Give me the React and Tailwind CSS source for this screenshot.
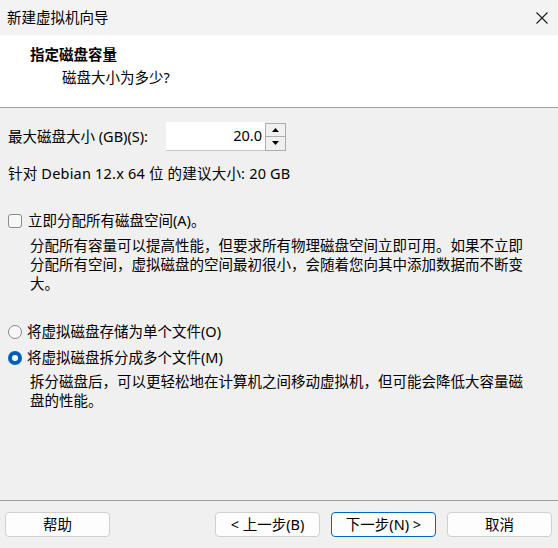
import React, { useState } from 'react';

const font = { fontFamily: '"Noto Sans", "Noto Sans CJK SC", sans-serif' };

const Button = ({ children, primary, className = '' }) => (
  <button
    className={`h-[25px] w-[105px] rounded-[4px] bg-[#fdfdfd] text-[14.5px] text-black leading-none ${
      primary ? 'border border-[#0067c0]' : 'border border-[#d0d0d0]'
    } ${className}`}
  >
    {children}
  </button>
);

const Radio = ({ checked, onClick, children }) => (
  <label className="flex h-[20px] cursor-default items-center" onClick={onClick}>
    {checked ? (
      <span className="mr-[5px] flex h-[14px] w-[14px] items-center justify-center rounded-full bg-[#005fb8]">
        <span className="h-[6px] w-[6px] rounded-full bg-white" />
      </span>
    ) : (
      <span className="mr-[5px] h-[14px] w-[14px] rounded-full border border-[#8a8a8a] bg-[#f7f7f7]" />
    )}
    <span>{children}</span>
  </label>
);

export default function App() {
  const [split, setSplit] = useState(true);
  const [alloc, setAlloc] = useState(false);

  return (
    <div className="flex h-[548px] w-[558px] flex-col bg-[#f0f0f0] text-[14.5px] text-black" style={font}>
      {/* Title bar */}
      <div className="flex h-[35px] shrink-0 items-center justify-between bg-[#f3f3f3] pl-[7px] pr-[8px]">
        <span className="text-[14.5px]">新建虚拟机向导</span>
        <svg width="14" height="14" viewBox="0 0 14 14" className="mr-[1px]">
          <path d="M1.5 1.5 L12.5 12.5 M12.5 1.5 L1.5 12.5" stroke="#1a1a1a" strokeWidth="1.1" fill="none" />
        </svg>
      </div>

      {/* Header */}
      <div className="h-[73px] shrink-0 border-b border-[#a0a0a0] bg-white pt-[8px]">
        <div className="h-[22px] pl-[30px] font-bold leading-[22px]">指定磁盘容量</div>
        <div className="mt-[1px] pl-[62px] leading-[22px]">磁盘大小为多少?</div>
      </div>

      {/* Body */}
      <div className="flex-1 px-[8px] pt-[14px]">
        <div className="flex h-[29px] items-center">
          <span className="w-[158px]">最大磁盘大小 (GB)(S):</span>
          <div className="flex h-[29px] items-center">
            <div className="flex h-[29px] w-[99px] items-center justify-end border-b border-[#c8c8c8] bg-white pr-[3px]">
              20.0
            </div>
            <div className="flex h-[28px] w-[21px] flex-col border border-[#adadad] bg-[#f0f0f0]">
              <div className="flex flex-1 items-center justify-center border-b border-[#adadad]">
                <svg width="7" height="4" viewBox="0 0 7 4"><path d="M0 4 L3.5 0 L7 4 Z" fill="#000" /></svg>
              </div>
              <div className="flex flex-1 items-center justify-center">
                <svg width="7" height="4" viewBox="0 0 7 4"><path d="M0 0 L3.5 4 L7 0 Z" fill="#000" /></svg>
              </div>
            </div>
          </div>
        </div>
        <div className="mt-[11px] leading-[22px] tracking-[0.2px]">针对 Debian 12.x 64 位 的建议大小: 20 GB</div>

        <label className="mt-[27px] flex h-[20px] items-center" onClick={() => setAlloc(!alloc)}>
          <span
            className={`mr-[6px] h-[14px] w-[14px] rounded-[3px] border ${
              alloc ? 'border-[#005fb8] bg-[#005fb8]' : 'border-[#8a8a8a] bg-[#f7f7f7]'
            }`}
          />
          <span>立即分配所有磁盘空间(A)。</span>
        </label>
        <div className="mt-[5px] whitespace-nowrap pl-[22px] leading-[19px]">
          分配所有容量可以提高性能，但要求所有物理磁盘空间立即可用。如果不立即
          <br />
          分配所有空间，虚拟磁盘的空间最初很小，会随着您向其中添加数据而不断变
          <br />
          大。
        </div>

        <div className="mt-[29px] flex flex-col gap-[6px]">
          <Radio checked={!split} onClick={() => setSplit(false)}>将虚拟磁盘存储为单个文件(O)</Radio>
          <Radio checked={split} onClick={() => setSplit(true)}>将虚拟磁盘拆分成多个文件(M)</Radio>
        </div>
        <div className="mt-[4px] whitespace-nowrap pl-[22px] leading-[18.5px]">
          拆分磁盘后，可以更轻松地在计算机之间移动虚拟机，但可能会降低大容量磁
          <br />
          盘的性能。
        </div>
      </div>

      {/* Footer */}
      <div className="flex h-[48px] shrink-0 items-start border-t border-[#a0a0a0] pt-[11px]">
        <Button className="ml-[5px]">帮助</Button>
        <Button className="ml-[105px]">&lt; 上一步(B)</Button>
        <Button primary className="ml-[11px]">下一步(N) &gt;</Button>
        <Button className="ml-[11px]">取消</Button>
      </div>
    </div>
  );
}
